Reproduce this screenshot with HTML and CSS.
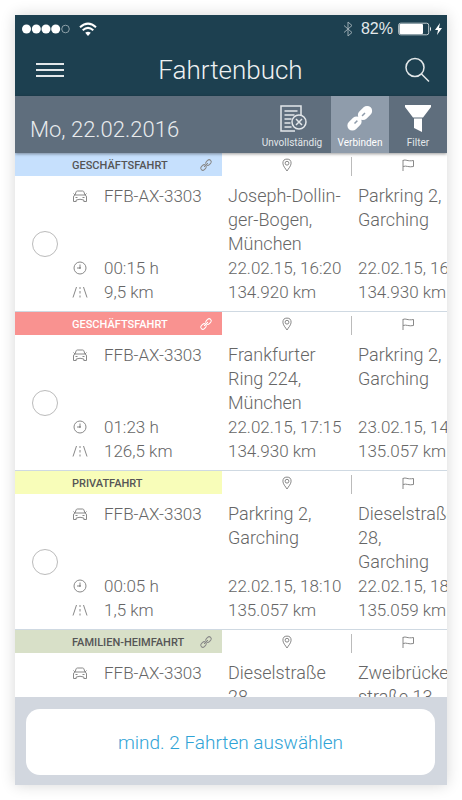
FILE: index.html
```html
<!DOCTYPE html>
<html lang="de">
<head>
  <meta charset="UTF-8" />
  <meta name="viewport" content="width=device-width, initial-scale=1.0" />
  <title>Fahrtenbuch</title>
  <link rel="stylesheet" href="styles.css">
</head>
<body>
  <!-- shared icons -->
  <svg class="sprite" aria-hidden="true">
    <symbol id="link" viewBox="0 0 14 14">
      <rect x="-3" y="-2.1" width="6" height="4.2" rx="2.1" transform="translate(9.5 4.5) rotate(-45)" />
      <rect x="-3" y="-2.1" width="6" height="4.2" rx="2.1" transform="translate(4.5 9.5) rotate(-45)" />
      <path d="M5 9L9 5" />
    </symbol>
    <symbol id="pin" viewBox="0 0 14 14">
      <path d="M7 13C5.500 10.500 2.900 8 2.900 5.200a4.100 4.100 0 0 1 8.200 0C11.100 8 8.500 10.500 7 13z" />
      <circle cx="7" cy="5.200" r="1.900" />
    </symbol>
    <symbol id="flag" viewBox="0 0 14 14">
      <path d="M2 13V2M2 2.500c3-1.500 4 1.200 10.500 0v6c-5 1.200-7-1.300-10.500 0" />
    </symbol>
    <symbol id="car" viewBox="0 0 16 14">
      <path d="M3 6L4.200 2.700Q4.500 2 5.300 2h5.400q.8 0 1.100.7L13 6M1.500 4.500L3 6h10l1.500-1.500M3 6Q1.500 6.500 1.500 8v4.500h2.700V11q3.800-1.500 7.600 0v1.500h2.700V8Q14.500 6.500 13 6" />
      <path d="M3.500 8.500h2M10.500 8.500h2" />
    </symbol>
    <symbol id="clock" viewBox="0 0 16 14">
      <circle cx="8" cy="7" r="6" />
      <path d="M8 3.500V7H5" />
      <circle cx="8" cy="7" r=".6" />
    </symbol>
    <symbol id="road" viewBox="0 0 16 14">
      <path d="M4.500 2L1 12.500M11.500 2L15 12.500M8 2v2M8 6v2.500M8 10.500v2" />
    </symbol>
  </svg>

  <div class="app">
    <header class="header">
      <div class="status">
        <svg class="signal" viewBox="0 0 50 12">
          <circle cx="4.500" cy="6" r="4.500" /><circle cx="14.300" cy="6" r="4.500" /><circle cx="24" cy="6" r="4.500" /><circle cx="33.700" cy="6" r="4.500" />
          <circle class="empty" cx="43.500" cy="6" r="3.800" />
        </svg>
        <svg class="wifi" viewBox="0 0 18 14">
          <path d="M1 5.200Q9-2 17 5.200M3.700 8.200Q9 3.500 14.300 8.200" />
          <path class="dot" d="M9 14L6.200 10.800Q9 8.500 11.800 10.800z" />
        </svg>
        <svg class="bluetooth" viewBox="0 0 10 16"><path d="M1 4.500l8 7L5 15V1l4 3.500-8 7" /></svg>
        <span class="percent">82%</span>
        <svg class="battery" viewBox="0 0 44 14">
          <rect class="shell" x=".7" y="1.200" width="30" height="11.600" rx="2" />
          <rect class="charge" x="1.500" y="2" width="23.500" height="10" rx="1" />
          <path class="charge" d="M32 4.500q2 2.500 0 5zM42 1l-5 7h3l-1 5 5-7h-3z" />
        </svg>
      </div>
      <div class="titlebar">
        <button class="icon-button" type="button" aria-label="Menü">
          <svg viewBox="0 0 28 28"><path d="M0 8h28M0 14h28M0 20h28" /></svg>
        </button>
        <h1>Fahrtenbuch</h1>
        <button class="icon-button" type="button" aria-label="Suche">
          <svg class="search" viewBox="0 0 28 28"><circle cx="12" cy="11.500" r="9" /><path d="M18.500 18l7.500 7.500" /></svg>
        </button>
      </div>
    </header>

    <div class="toolbar">
      <h2>Mo, 22.02.2016</h2>
      <button class="tool tool-wide" type="button">
        <svg viewBox="0 0 30 30">
          <path d="M24 12V2H4v25h14M7.500 7h13M7.500 11h10M7.500 15h7M7.500 19h6M7.500 23h7" />
          <circle cx="22" cy="18" r="7" /><path d="M19 15l6 6M25 15l-6 6" />
        </svg>
        Unvollständig
      </button>
      <button class="tool active" type="button">
        <svg viewBox="0 0 30 30">
          <rect class="solid" x="-8" y="-5" width="16" height="10" rx="5" transform="translate(20 9) rotate(-45)" />
          <rect class="solid" x="-8" y="-5" width="16" height="10" rx="5" transform="translate(9.500 19.500) rotate(-45)" />
          <path class="cut" d="M9.500 19.500l3-3M17 12l3-3" /><path d="M12.500 16.500l4.500-4.500" />
        </svg>
        Verbinden
      </button>
      <button class="tool" type="button">
        <svg viewBox="0 0 30 30">
          <path class="solid" d="M2 1h26v2l-8 10.500H10L2 3zM11 14.500h8V28l-8-4z" />
        </svg>
        Filter
      </button>
    </div>

    <main class="trips">
      <article class="trip">
        <div class="trip-head">
          <label class="type business" for="trip1">GESCHÄFTSFAHRT <svg class="icon"><use href="#link" /></svg></label>
          <div class="from"><svg class="icon"><use href="#pin" /></svg></div>
          <div class="to"><svg class="icon"><use href="#flag" /></svg></div>
        </div>
        <div class="trip-body">
          <input class="select" type="checkbox" id="trip1" />
          <div class="icons">
            <svg><use href="#car" /></svg><svg><use href="#clock" /></svg><svg><use href="#road" /></svg>
          </div>
          <div class="col"><p>FFB-AX-3303</p><p>00:15 h</p><p>9,5 km</p></div>
          <div class="col"><p class="place">Joseph-Dollin-<br>ger-Bogen,<br>München</p><p>22.02.15, 16:20</p><p>134.920 km</p></div>
          <div class="col"><p class="place">Parkring 2,<br>Garching</p><p>22.02.15, 16:35</p><p>134.930 km</p></div>
        </div>
      </article>

      <article class="trip">
        <div class="trip-head">
          <label class="type open" for="trip2">GESCHÄFTSFAHRT <svg class="icon"><use href="#link" /></svg></label>
          <div class="from"><svg class="icon"><use href="#pin" /></svg></div>
          <div class="to"><svg class="icon"><use href="#flag" /></svg></div>
        </div>
        <div class="trip-body">
          <input class="select" type="checkbox" id="trip2" />
          <div class="icons">
            <svg><use href="#car" /></svg><svg><use href="#clock" /></svg><svg><use href="#road" /></svg>
          </div>
          <div class="col"><p>FFB-AX-3303</p><p>01:23 h</p><p>126,5 km</p></div>
          <div class="col"><p class="place">Frankfurter<br>Ring 224,<br>München</p><p>22.02.15, 17:15</p><p>134.930 km</p></div>
          <div class="col"><p class="place">Parkring 2,<br>Garching</p><p>23.02.15, 14:38</p><p>135.057 km</p></div>
        </div>
      </article>

      <article class="trip">
        <div class="trip-head">
          <label class="type private" for="trip3">PRIVATFAHRT</label>
          <div class="from"><svg class="icon"><use href="#pin" /></svg></div>
          <div class="to"><svg class="icon"><use href="#flag" /></svg></div>
        </div>
        <div class="trip-body">
          <input class="select" type="checkbox" id="trip3" />
          <div class="icons">
            <svg><use href="#car" /></svg><svg><use href="#clock" /></svg><svg><use href="#road" /></svg>
          </div>
          <div class="col"><p>FFB-AX-3303</p><p>00:05 h</p><p>1,5 km</p></div>
          <div class="col"><p class="place">Parkring 2,<br>Garching</p><p>22.02.15, 18:10</p><p>135.057 km</p></div>
          <div class="col"><p class="place">Dieselstraße<br>28,<br>Garching</p><p>22.02.15, 18:15</p><p>135.059 km</p></div>
        </div>
      </article>

      <article class="trip">
        <div class="trip-head">
          <label class="type family" for="trip4">FAMILIEN-HEIMFAHRT <svg class="icon"><use href="#link" /></svg></label>
          <div class="from"><svg class="icon"><use href="#pin" /></svg></div>
          <div class="to"><svg class="icon"><use href="#flag" /></svg></div>
        </div>
        <div class="trip-body">
          <input class="select" type="checkbox" id="trip4" />
          <div class="icons">
            <svg><use href="#car" /></svg>
          </div>
          <div class="col"><p>FFB-AX-3303</p></div>
          <div class="col"><p class="place">Dieselstraße<br>28,</p></div>
          <div class="col"><p class="place">Zweibrücken-<br>straße 13</p></div>
        </div>
      </article>
    </main>

    <footer class="footer">
      <button class="submit" type="button">mind. 2 Fahrten auswählen</button>
    </footer>
  </div>
</body>
</html>
```

FILE: styles.css
```css
* {
  box-sizing: border-box;
}

body {
  margin: 0;
  padding: 15px;
  height: 100vh;
  background-color: #fff;
  font-family: Roboto, sans-serif;
  font-weight: 300;
}

h1,
h2,
p {
  margin: 0;
  font-weight: 300;
}

button {
  border: none;
  padding: 0;
  background: none;
  font-family: inherit;
  cursor: pointer;
}

svg {
  display: block;
  flex: none;
  fill: none;
  stroke: currentColor;
}

.sprite {
  display: none;
}

.app {
  display: flex;
  flex-direction: column;
  height: 100%;
  overflow: hidden;
  background-color: #fff;
  box-shadow: 0 0 14px rgba(0, 0, 0, 0.16);
}

/* header */
.header {
  flex: none;
  background-color: #1d4050;
  color: #fff;
}

.status {
  display: flex;
  align-items: center;
  height: 28px;
  padding: 0 5px 0 7px;
}

.signal {
  width: 50px;
  height: 12px;
  fill: #fff;
  stroke: none;
}

.signal .empty {
  fill: none;
  stroke: #8fa1a9;
}

.wifi {
  width: 18px;
  height: 14px;
  margin-left: 7px;
  margin-right: auto;
  stroke-width: 2;
}

.wifi .dot {
  fill: #fff;
  stroke: none;
}

.bluetooth {
  width: 10px;
  height: 16px;
  color: #9babb2;
}

.percent {
  margin: 0 5px 0 8px;
  color: #e4e9eb;
  font-family: "Liberation Sans", Arial, sans-serif;
  font-size: 16px;
  font-weight: 400;
}

.battery {
  width: 44px;
  height: 14px;
}

.battery .shell {
  stroke: #c3cdd1;
}

.battery .charge {
  fill: #fff;
  stroke: none;
}

.titlebar {
  display: flex;
  align-items: center;
  justify-content: space-between;
  height: 53px;
  padding: 0 16px 0 21px;
}

.titlebar h1 {
  padding-right: 6px;
  color: #eef1f2;
  font-size: 26px;
  line-height: 32px;
}

.icon-button svg {
  width: 28px;
  height: 28px;
  color: #e3e8ea;
  stroke-width: 2;
}

.icon-button .search {
  stroke-width: 1.500;
}

/* toolbar */
.toolbar {
  position: relative;
  display: flex;
  flex: none;
  height: 57px;
  background-color: #5f6e7d;
  box-shadow: 0 1px 3px rgba(0, 0, 0, 0.4);
}

.toolbar h2 {
  flex: 1;
  padding: 10px 0 0 15px;
  color: #e8ebed;
  font-size: 22px;
  line-height: 48px;
}

.tool {
  display: flex;
  flex-direction: column;
  align-items: center;
  width: 58px;
  padding-top: 8px;
  color: #e3e7ea;
  font-size: 10px;
  line-height: 18px;
}

.tool-wide {
  width: 78px;
}

.tool svg {
  width: 30px;
  height: 30px;
  stroke-width: 1.500;
}

.tool .solid {
  fill: #fff;
  stroke: none;
}

.tool .cut {
  stroke: #8f9cab;
}

.tool.active {
  background-color: #8f9cab;
  color: #fff;
}

/* trip list */
.trips {
  flex: 1;
  min-height: 0;
  overflow: hidden;
}

.trip {
  border-bottom: 1px solid #cfd9e2;
}

.trip-head {
  display: grid;
  grid-template-columns: 207px 130px 112px;
  height: 23px;
}

.type {
  display: flex;
  align-items: center;
  justify-content: space-between;
  padding: 1px 9px 0 57px;
  color: #555;
  font-size: 11px;
  font-weight: 500;
}

.icon {
  width: 14px;
  height: 14px;
  color: #888;
}

.business {
  background-color: #c6e0fd;
}

.open {
  background-color: #f99290;
  color: #fff;
}

.open .icon {
  color: #fff;
}

.private {
  background-color: #f8fdb9;
}

.family {
  background-color: #d8e0c8;
}

.from,
.to {
  display: flex;
  justify-content: center;
  padding-top: 5px;
}

.from {
  background: linear-gradient(#bbb, #bbb) right bottom / 1px 19px no-repeat;
}

.trip-body {
  display: grid;
  grid-template-columns: 57px 32px 124px 130px 114px;
  padding: 8px 0 7px;
  color: #666;
  font-size: 17px;
  line-height: 24px;
}

.place {
  font-size: 18px;
}

.select {
  appearance: none;
  align-self: center;
  width: 26px;
  height: 26px;
  margin: 0 0 0 17px;
  border: 1px solid #bbb;
  border-radius: 50%;
}

.select:checked {
  background-color: #3fabd9;
}

.icons,
.col {
  display: grid;
  grid-template-rows: 72px 24px 24px;
  white-space: nowrap;
}

.icons svg {
  width: 16px;
  height: 14px;
  margin-top: 5px;
  color: #888;
}

/* footer */
.footer {
  flex: none;
  padding: 12px 12px 10px 11px;
  background-color: #d2d7df;
}

.submit {
  width: 100%;
  height: 66px;
  border-radius: 14px;
  background-color: #fff;
  color: #2fa3d6;
  font-size: 19px;
  font-weight: 300;
}
```
